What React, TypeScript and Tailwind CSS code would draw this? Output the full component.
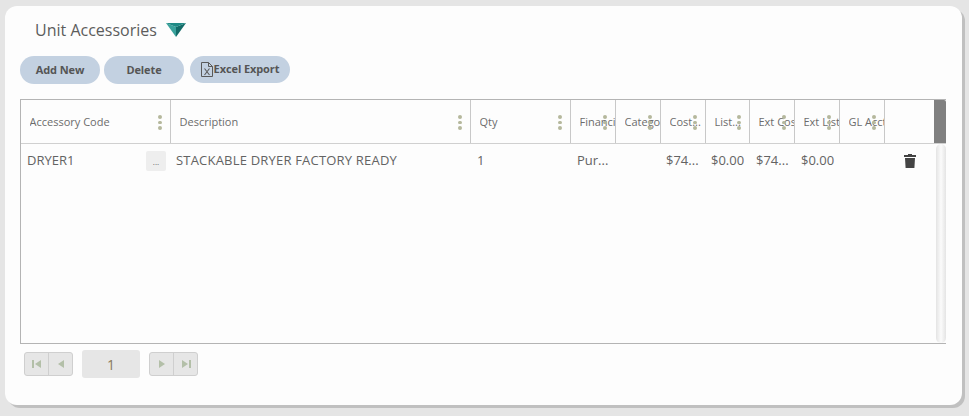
function Head({ label, w }: { label: string; w: string }) {
  return (
    <div className={`relative flex h-full items-center overflow-hidden border-r border-[#c8c8c8] pl-[8.500px] pt-[1px] text-[11px] text-[#6c6c6c] ${w}`}>
      <span className="block overflow-hidden whitespace-pre">{label}</span>
      <span className="absolute right-[8.500px] top-[15px] flex flex-col gap-[2px]">
        <i className="block h-[3.5px] w-[3.5px] rounded-full bg-[#b5b89c]" />
        <i className="block h-[3.5px] w-[3.5px] rounded-full bg-[#b5b89c]" />
        <i className="block h-[3.5px] w-[3.5px] rounded-full bg-[#b5b89c]" />
      </span>
    </div>
  );
}

function Pager({ children }: { children: React.ReactNode }) {
  return <div className="flex h-[24px] w-[49px] rounded-[3px] border border-[#cfcfcf] bg-[#e6e6e6]">{children}</div>;
}

function Tri({ dir, bar }: { dir: "l" | "r"; bar?: boolean }) {
  return (
    <svg width="12" height="12" viewBox="0 0 12 12" fill="#b3bfa8">
      {dir === "l" ? <path d={bar ? "M1 2h2v8H1zM10 2v8L4 6z" : "M9 2v8L3 6z"} /> : <path d={bar ? "M9 2h2v8H9zM2 2v8l6-4z" : "M3 2v8l6-4z"} />}
    </svg>
  );
}

export default function App() {
  return (
    <div className="h-[416px] w-[969px] overflow-hidden bg-[#e5e5e5] pl-[5px] pt-[6px] font-['Open_Sans',sans-serif]">
      <div className="h-[399px] w-[957px] rounded-[12px] bg-[#fdfdfd] pl-[15px] pr-[16px] shadow-[3px_3px_0_#c0c0c0]">
        <div className="flex h-[50px] items-center pb-[3px] pl-[15px]">
          <span className="text-[16px] leading-[22px] text-[#5c5c5c]">Unit Accessories</span>
          <svg className="ml-[9px]" width="20" height="15" viewBox="0 0 20 15">
            <path d="M0 1L10 5L10 15Z" fill="#3aa29c" />
            <path d="M20 1L10 5L10 15Z" fill="#136b68" />
            <path d="M0 1L20 1L10 5Z" fill="#1f8a85" />
          </svg>
        </div>
        <div className="flex items-start text-[11px] font-bold tracking-[-0.1px] text-[#555]">
          <button className="h-[28px] w-[80px] rounded-[14px] bg-[#c3d1e1]">Add New</button>
          <button className="ml-[4px] h-[28px] w-[80px] rounded-[14px] bg-[#c3d1e1]">Delete</button>
          <button className="ml-[6px] flex h-[27px] w-[100px] items-center justify-center rounded-[14px] bg-[#c3d1e1]">
            <svg width="12" height="15" viewBox="0 0 12 15" fill="none" stroke="#5a5a5a" strokeWidth="1">
              <path d="M.5 .5h7l4 4v10h-11z M7.500 .5v4h4" />
              <path d="M3.500 6.500l5 6.500M8.500 6.500l-5 6.500" strokeWidth="1.100" />
            </svg>
            <span className="ml-[1px]">Excel Export</span>
          </button>
        </div>
        <div className="mt-[15px] h-[245px] w-[926px] border-b border-l border-t border-[#b4b4b4]">
          <div className="flex h-[44px] border-b border-[#d0d0d0]">
            <Head label="Accessory Code" w="w-[150px]" />
            <Head label="Description" w="w-[300px]" />
            <Head label="Qty" w="w-[100px]" />
            <Head label="Financial" w="w-[45px]" />
            <Head label="Category" w="w-[45px]" />
            <Head label="Cost..." w="w-[45px]" />
            <Head label="List..." w="w-[44px]" />
            <Head label="Ext Cost" w="w-[45px]" />
            <Head label="Ext List" w="w-[45px]" />
            <Head label="GL Acct" w="w-[45px]" />
            <div className="h-full w-[49px]" />
            <div className="h-full w-[12px] rounded-tr-[2px] bg-[#808080]" />
          </div>
          <div className="flex h-[200px]">
            <div className="flex h-[33px] w-[915px] items-center text-[13px] text-[#636363]">
              <span className="w-[125px] shrink-0 pl-[6px]">DRYER1</span>
              <span className="flex h-[20px] w-[20px] shrink-0 items-center justify-center rounded-[2px] bg-[#eeeeee] pt-[3px] text-[8px] leading-none">...</span>
              <span className="w-[311px] shrink-0 pl-[10px] tracking-[0.2px]">STACKABLE DRYER FACTORY READY</span>
              <span className="w-[100px] shrink-0">1</span>
              <span className="w-[89px] shrink-0">Pur...</span>
              <span className="w-[45px] shrink-0">$74...</span>
              <span className="w-[45px] shrink-0">$0.00</span>
              <span className="w-[45px] shrink-0">$74...</span>
              <span className="w-[45px] shrink-0">$0.00</span>
              <span className="flex w-[70px] shrink-0 justify-end">
                <svg width="12" height="14" viewBox="0 0 12 14" fill="#444">
                  <path d="M4 0h4v1h4v2H0V1h4zM1 4h10l-.6 10H1.600z" />
                </svg>
              </span>
            </div>
            <div className="h-[199px] w-[10px] rounded-[5px] bg-gradient-to-r from-[#e4e4e4] via-[#fbfbfb] to-[#e4e4e4]" />
          </div>
        </div>
        <div className="flex items-center pl-[4px] pt-[6px]">
          <Pager>
            <span className="flex w-[24px] items-center justify-center border-r border-[#cfcfcf]"><Tri dir="l" bar /></span>
            <span className="flex flex-1 items-center justify-center"><Tri dir="l" /></span>
          </Pager>
          <div className="mx-[9px] flex h-[28px] w-[58px] items-center justify-center rounded-[3px] bg-[#e6e6e6] text-[14px] text-[#8a7a5a]">1</div>
          <Pager>
            <span className="flex w-[24px] items-center justify-center border-r border-[#cfcfcf]"><Tri dir="r" /></span>
            <span className="flex flex-1 items-center justify-center"><Tri dir="r" bar /></span>
          </Pager>
        </div>
      </div>
    </div>
  );
}
